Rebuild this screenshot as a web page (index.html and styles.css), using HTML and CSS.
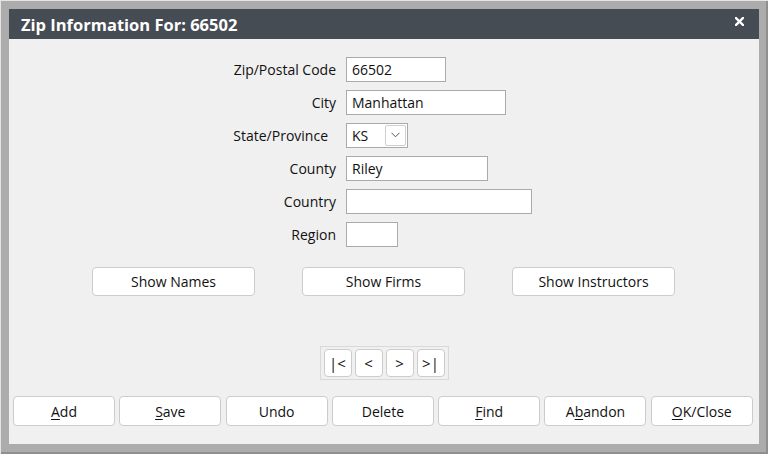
FILE: index.html
```html
<!DOCTYPE html>
<html>
<head>
<meta charset="utf-8">
<link rel="stylesheet" href="styles.css">
</head>
<body>
<div class="frame">
  <div class="window">
    <div class="titlebar">
      <span class="title">Zip Information For: 66502</span>
      <svg class="close" width="9" height="9" viewBox="0 0 9 9"><path d="M1 1L8 8M8 1L1 8" stroke="#fff" stroke-width="2.4" stroke-linecap="square"/></svg>
    </div>
    <div class="content">
      <div class="form">
        <label class="lbl">Zip/Postal Code</label>
        <div class="field w-zip">66502</div>
        <label class="lbl">City</label>
        <div class="field w-city">Manhattan</div>
        <label class="lbl lbl-state">State/Province</label>
        <div class="select">
          <span class="select-val">KS</span>
          <span class="select-btn"><svg width="9" height="6" viewBox="0 0 9 6"><path d="M0.5 0.8L4.5 4.8L8.5 0.8" fill="none" stroke="#555" stroke-width="1"/></svg></span>
        </div>
        <label class="lbl">County</label>
        <div class="field w-county">Riley</div>
        <label class="lbl">Country</label>
        <div class="field w-country"></div>
        <label class="lbl">Region</label>
        <div class="field w-region"></div>
      </div>
      <div class="showrow">
        <button class="btn show">Show Names</button>
        <button class="btn show">Show Firms</button>
        <button class="btn show">Show Instructors</button>
      </div>
      <div class="pager-wrap">
        <div class="pager">
          <button class="btn pg">|&lt;</button>
          <button class="btn pg">&lt;</button>
          <button class="btn pg">&gt;</button>
          <button class="btn pg">&gt;|</button>
        </div>
      </div>
      <div class="actions">
        <button class="btn act"><u>A</u>dd</button>
        <button class="btn act"><u>S</u>ave</button>
        <button class="btn act">Undo</button>
        <button class="btn act">Delete</button>
        <button class="btn act"><u>F</u>ind</button>
        <button class="btn act">A<u>b</u>andon</button>
        <button class="btn act"><u>O</u>K/Close</button>
      </div>
    </div>
  </div>
</div>
</body>
</html>
```

FILE: styles.css
```css
html, body {
  margin: 0;
  padding: 0;
}
body {
  width: 768px;
  height: 454px;
  overflow: hidden;
  background: #a8a8a8;
  font-family: "Open Sans", "Noto Sans", sans-serif;
  color: #111;
}
.frame {
  box-sizing: border-box;
  width: 768px;
  height: 454px;
  padding: 9px 9px 10px 9px;
  background: #acacac;
  box-shadow: inset 1px 1px 0 #e4e4e4, inset -2px -2px 0 #8f8f8f;
}
.window {
  height: 100%;
  display: flex;
  flex-direction: column;
  background: #f0f0f0;
}
.titlebar {
  height: 30px;
  flex: 0 0 30px;
  background: #454c54;
  display: flex;
  align-items: center;
  justify-content: space-between;
  padding: 0 15px 0 12px;
}
.title {
  color: #fff;
  font-weight: 700;
  font-size: 16.5px;
  letter-spacing: 0;
}
.close {
  margin-top: -6px;
}
.content {
  flex: 1;
  display: flex;
  flex-direction: column;
  padding-top: 18px;
}
.form {
  display: grid;
  grid-template-columns: 327px auto;
  grid-template-rows: 25px 25px 25px 25px 25px 25px;
  column-gap: 10px;
  row-gap: 8px;
  align-items: center;
}
.lbl {
  text-align: right;
  font-size: 14px;
  line-height: 25px;
}
.lbl-state {
  padding-right: 8px;
}
.field {
  box-sizing: border-box;
  height: 25px;
  background: #fff;
  border: 1px solid #aaaaaa;
  font-size: 14px;
  line-height: 23px;
  padding-left: 5px;
}
.w-zip { width: 100px; }
.w-city { width: 160px; }
.w-county { width: 142px; }
.w-country { width: 186px; }
.w-region { width: 52px; }
.select {
  box-sizing: border-box;
  width: 62px;
  height: 25px;
  background: #fff;
  border: 1px solid #aaaaaa;
  display: flex;
  align-items: center;
  justify-content: space-between;
  padding: 0 1px 0 5px;
  font-size: 14px;
}
.select-btn {
  box-sizing: border-box;
  width: 21px;
  height: 21px;
  border: 1px solid #cfcfcf;
  border-radius: 2px;
  display: flex;
  align-items: center;
  justify-content: center;
  margin-top: -1px;
}
.btn {
  box-sizing: border-box;
  background: #fff;
  border: 1px solid #cccccc;
  border-radius: 4px;
  font-family: "Open Sans", "Noto Sans", sans-serif;
  font-size: 14px;
  color: #111;
  padding: 0;
  margin: 0;
}
.showrow {
  display: flex;
  gap: 47px;
  padding-left: 83px;
  margin-top: 20px;
}
.show {
  width: 163px;
  height: 29px;
}
.pager-wrap {
  display: flex;
  justify-content: center;
  margin-top: 50px;
}
.pager {
  display: flex;
  gap: 3px;
  padding: 2px 3px;
  border: 1px solid #d9d9d9;
}
.pg {
  width: 28px;
  height: 28px;
  font-size: 15px;
}
.actions {
  display: flex;
  gap: 4.3px;
  padding-left: 4px;
  margin-top: 16px;
}
.act {
  width: 102px;
  height: 30px;
}
u {
  text-underline-offset: 2px;
}
```
